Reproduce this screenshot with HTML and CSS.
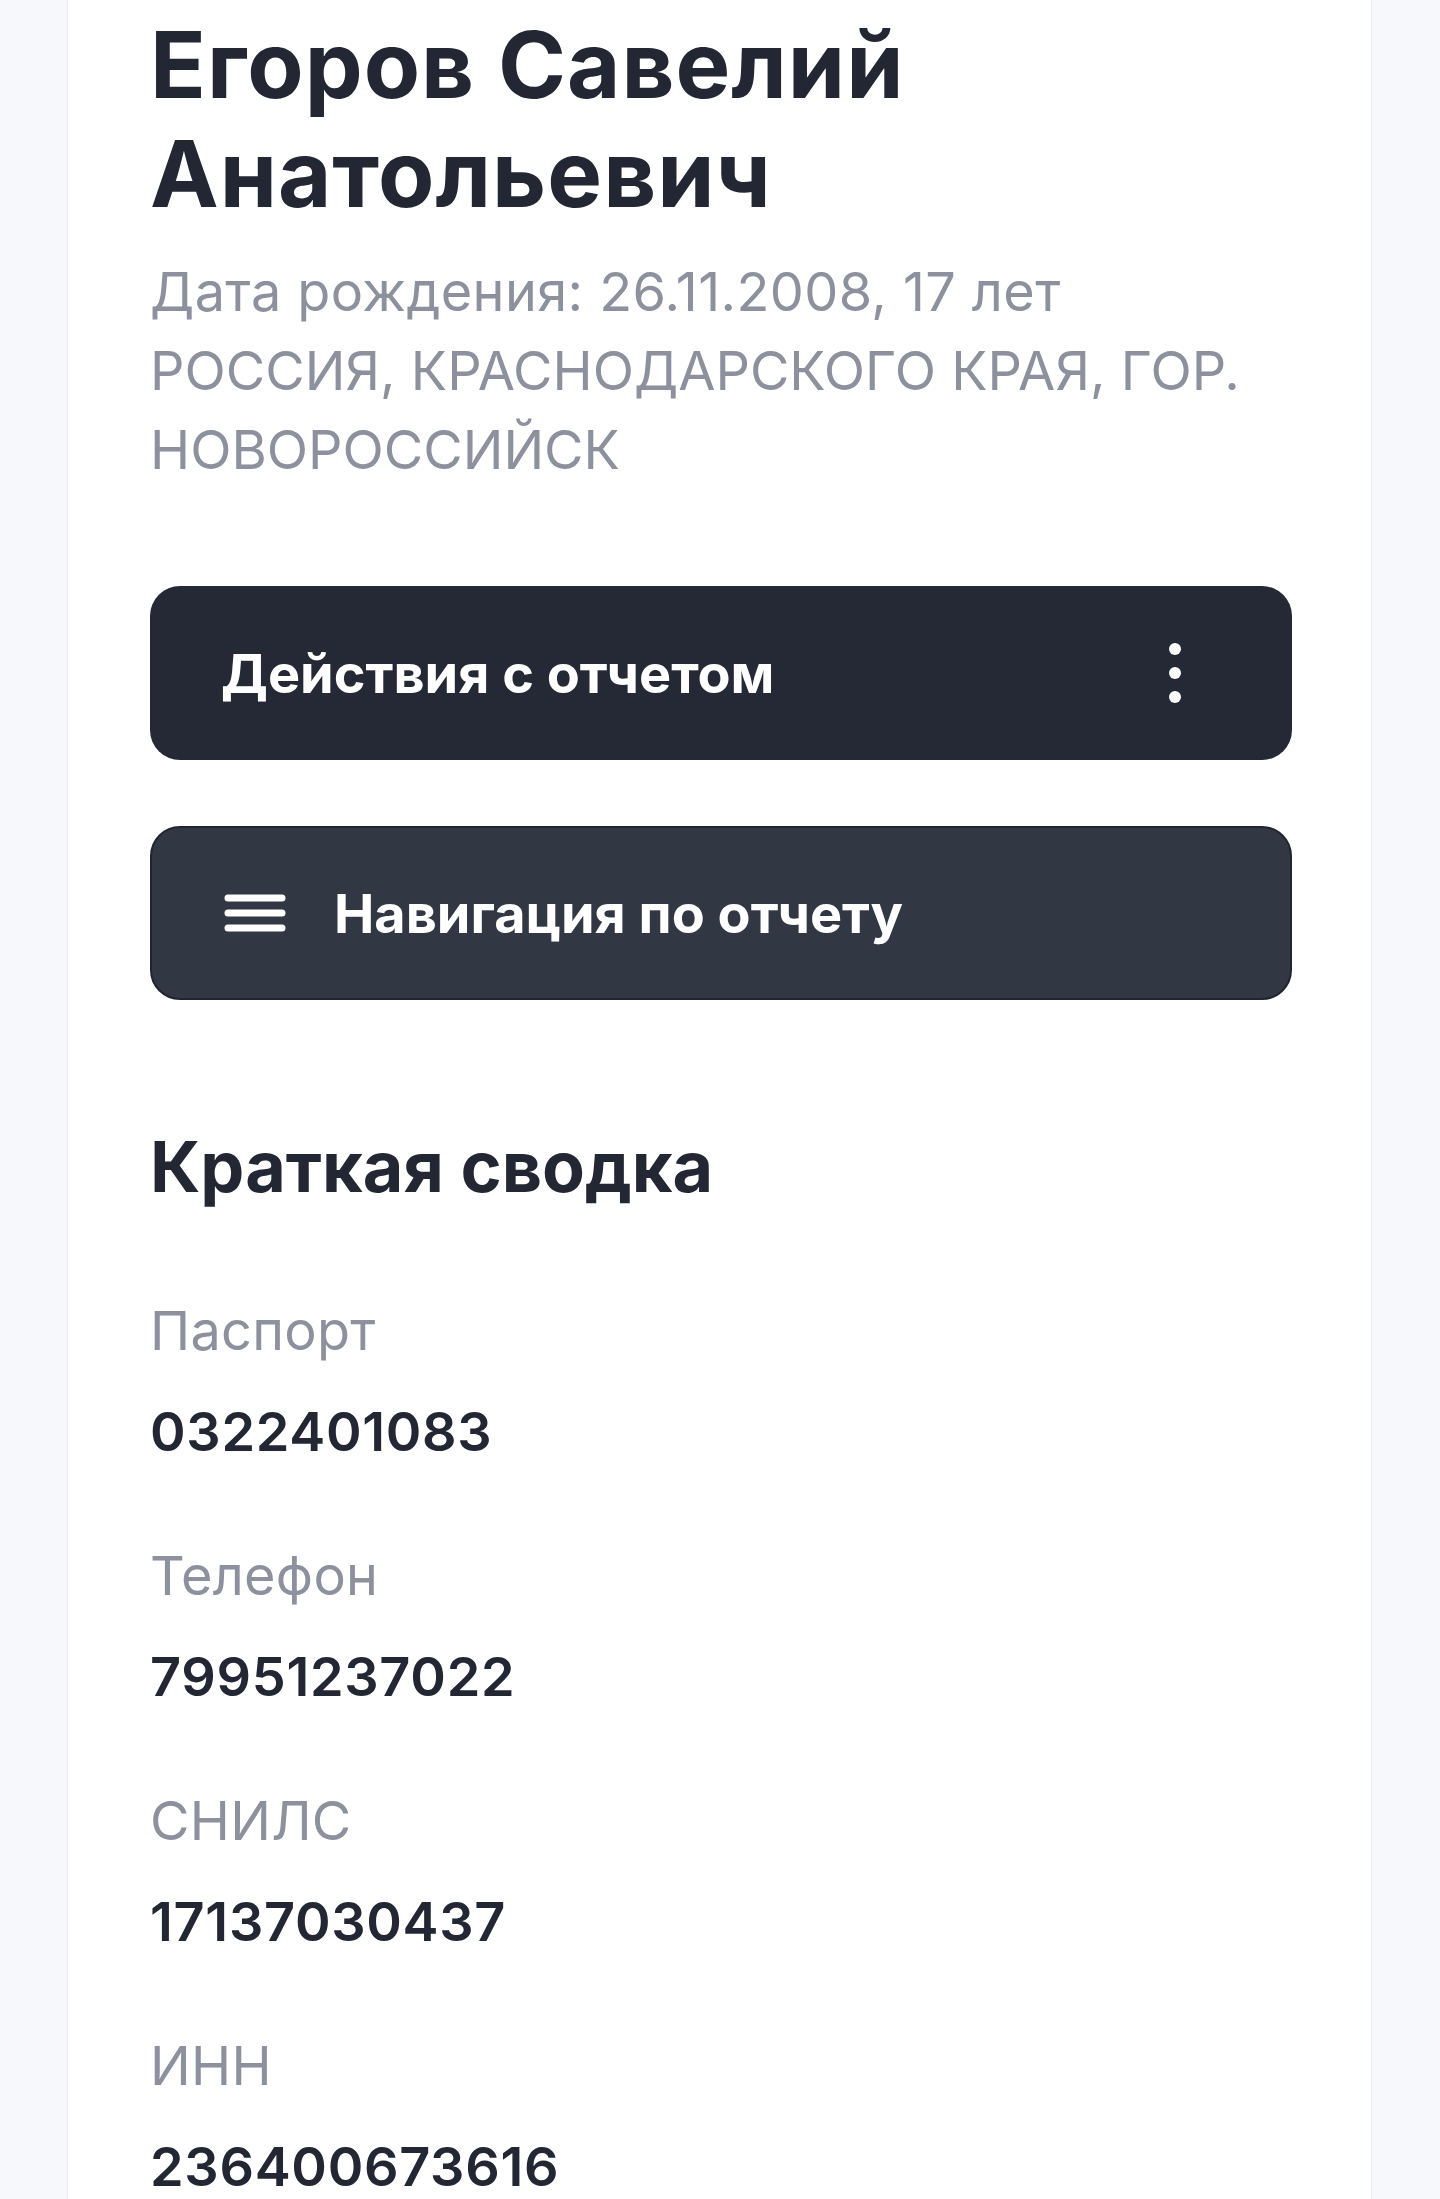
FILE: index.html
```html
<!DOCTYPE html>
<html lang="ru">
<head>
    <meta charset="UTF-8">
    <meta name="viewport" content="width=device-width, initial-scale=1.0">
    <title>Отчет</title>
    <link rel="stylesheet" href="styles.css">
</head>
<body>
    <div class="card">
        <!-- Person header -->
        <h1 class="person-name">Егоров Савелий Анатольевич</h1>
        <div class="person-info">
            <div class="birth-date">Дата рождения: 26.11.2008, 17 лет</div>
            <div>РОССИЯ, КРАСНОДАРСКОГО КРАЯ, ГОР. НОВОРОССИЙСК</div>
        </div>

        <!-- Report buttons -->
        <button type="button" class="report-button actions-button">
            <span>Действия с отчетом</span>
            <svg class="kebab" width="12" height="60" viewBox="0 0 12 60">
                <circle cx="6" cy="6" r="6" fill="#fff"/>
                <circle cx="6" cy="30" r="6" fill="#fff"/>
                <circle cx="6" cy="54" r="6" fill="#fff"/>
            </svg>
        </button>
        <button type="button" class="report-button nav-button">
            <svg class="burger" width="62" height="38" viewBox="0 0 62 38">
                <line x1="4" y1="4" x2="58" y2="4" stroke="#fff" stroke-width="7" stroke-linecap="round"/>
                <line x1="4" y1="19" x2="58" y2="19" stroke="#fff" stroke-width="7" stroke-linecap="round"/>
                <line x1="4" y1="34" x2="58" y2="34" stroke="#fff" stroke-width="7" stroke-linecap="round"/>
            </svg>
            <span>Навигация по отчету</span>
        </button>

        <!-- Summary -->
        <h2 class="summary-title">Краткая сводка</h2>
        <div class="summary-list">
            <div class="summary-item">
                <div class="summary-label">Паспорт</div>
                <div class="summary-value">0322401083</div>
            </div>
            <div class="summary-item">
                <div class="summary-label">Телефон</div>
                <div class="summary-value">79951237022</div>
            </div>
            <div class="summary-item">
                <div class="summary-label">СНИЛС</div>
                <div class="summary-value">17137030437</div>
            </div>
            <div class="summary-item">
                <div class="summary-label">ИНН</div>
                <div class="summary-value">236400673616</div>
            </div>
        </div>
    </div>
</body>
</html>
```

FILE: styles.css
```css
body {
    font-family: Inter, "Noto Sans", Arial, sans-serif;
    margin: 0;
    background-color: #f7f8fc;
    color: #232733;
}
.card {
    margin: 0 0 0 67px;
    width: 1305px;
    min-height: 2199px;
    box-sizing: border-box;
    padding: 10px 79px 40px 82px;
    background-color: #fff;
    border: 1px solid #ebebf1;
    border-top: none;
}
.person-name {
    margin: 0;
    font-size: 92px;
    line-height: 109px;
    font-weight: 700;
    letter-spacing: 1px;
}
.person-info {
    margin-top: 24px;
    font-size: 54px;
    line-height: 79px;
    color: #8d909d;
}
.birth-date {
    letter-spacing: 0.4px;
}
.report-button {
    display: flex;
    align-items: center;
    width: 100%;
    height: 174px;
    border-radius: 30px;
    border: none;
    color: #fff;
    font-family: inherit;
    font-size: 54px;
    font-weight: 700;
    cursor: pointer;
    text-align: left;
}
.actions-button {
    margin-top: 97px;
    padding: 0 111px 0 71px;
    justify-content: space-between;
    background-color: #252935;
}
.nav-button {
    margin-top: 66px;
    padding: 0 0 0 72px;
    gap: 48px;
    background-color: #323744;
    border: 2px solid #21252f;
}
.kebab, .burger {
    flex-shrink: 0;
}
.summary-title {
    margin: 121px 0 0;
    font-size: 70px;
    line-height: 91px;
    font-weight: 700;
}
.summary-list {
    margin-top: 78px;
}
.summary-item {
    margin-bottom: 63px;
    font-size: 54px;
    line-height: 81px;
}
.summary-label {
    color: #8d909d;
    letter-spacing: 0.3px;
}
.summary-value {
    margin-top: 20px;
    font-weight: 600;
    letter-spacing: 0.7px;
}
```
